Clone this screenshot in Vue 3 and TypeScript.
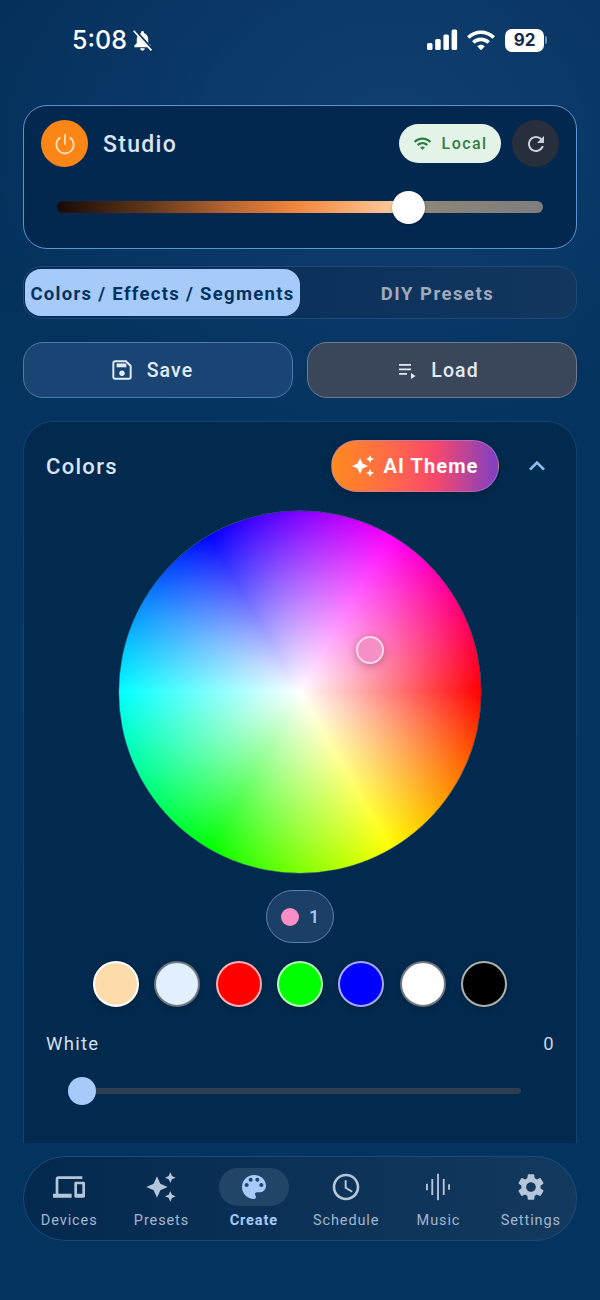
<script setup lang="ts">
const swatches: string[][] = [
  ['#fddcac', '#ffffff'],
  ['#e2f0fd', '#6d7480'],
  ['#ff0000', '#ffb0b0'],
  ['#00ff00', '#b4ffb4'],
  ['#0000ff', '#a8a8ff'],
  ['#ffffff', '#6f7680'],
  ['#000000', '#b0b0b0'],
]
const navItems = [
  { label: 'Devices', d: 'M4 6h18V4H4c-1.1 0-2 .9-2 2v11H0v3h14v-3H4V6zm19 2h-6c-.55 0-1 .45-1 1v10c0 .55.45 1 1 1h6c.55 0 1-.45 1-1V9c0-.55-.45-1-1-1zm-1 9h-4v-7h4v7z' },
  { label: 'Presets', d: 'M19 9l1.25-2.75L23 5l-2.75-1.25L19 1l-1.25 2.75L15 5l2.75 1.25L19 9zm-7.5.5L9 4 6.5 9.5 1 12l5.5 2.5L9 20l2.5-5.5L17 12l-5.5-2.5zM19 15l-1.25 2.75L15 19l2.75 1.25L19 23l1.25-2.75L23 19l-2.75-1.25L19 15z' },
  { label: 'Create', active: true, d: 'M12 3c-4.97 0-9 4.03-9 9s4.03 9 9 9c.83 0 1.5-.67 1.5-1.5 0-.39-.15-.74-.39-1.01-.23-.26-.38-.61-.38-.99 0-.83.67-1.5 1.5-1.5H16c2.76 0 5-2.24 5-5 0-4.42-4.03-8-9-8zm-5.5 9c-.83 0-1.5-.67-1.5-1.5S5.67 9 6.5 9 8 9.67 8 10.5 7.33 12 6.5 12zm3-4C8.67 8 8 7.33 8 6.5S8.67 5 9.5 5s1.5.67 1.5 1.5S10.33 8 9.5 8zm5 0c-.83 0-1.5-.67-1.5-1.5S13.67 5 14.5 5s1.5.67 1.5 1.5S15.33 8 14.5 8zm3 4c-.83 0-1.5-.67-1.5-1.5S16.67 9 17.5 9s1.5.67 1.5 1.5-.67 1.5-1.5 1.5z' },
  { label: 'Schedule', d: 'M11.99 2C6.47 2 2 6.48 2 12s4.47 10 9.99 10C17.52 22 22 17.52 22 12S17.52 2 11.99 2zM12 20c-4.42 0-8-3.58-8-8s3.58-8 8-8 8 3.58 8 8-3.58 8-8 8zm.5-13H11v6l5.25 3.15.75-1.23-4.5-2.67z' },
  { label: 'Music', d: 'M7 18h1.4V6H7v12zm4.3 4h1.4V2h-1.4v20zM3 14.5h1.4v-5H3v5zm12.6 3.5H17V6h-1.4v12zm4-8v4H21v-4h-1.4z' },
  { label: 'Settings', d: 'M19.14 12.94c.04-.3.06-.61.06-.94 0-.32-.02-.64-.07-.94l2.03-1.58c.18-.14.23-.41.12-.61l-1.92-3.32c-.12-.22-.37-.29-.59-.22l-2.39.96c-.5-.38-1.03-.7-1.62-.94l-.36-2.54c-.04-.24-.24-.41-.48-.41h-3.84c-.24 0-.43.17-.47.41l-.36 2.54c-.59.24-1.13.57-1.62.94l-2.39-.96c-.22-.08-.47 0-.59.22L2.74 8.87c-.12.21-.08.47.12.61l2.03 1.58c-.05.3-.09.63-.09.94s.02.64.07.94l-2.03 1.58c-.18.14-.23.41-.12.61l1.92 3.32c.12.22.37.29.59.22l2.39-.96c.5.38 1.03.7 1.62.94l.36 2.54c.05.24.24.41.48.41h3.84c.24 0 .44-.17.47-.41l.36-2.54c.59-.24 1.13-.56 1.62-.94l2.39.96c.22.08.47 0 .59-.22l1.92-3.32c.12-.22.07-.47-.12-.61l-2.01-1.58zM12 15.6c-1.98 0-3.6-1.62-3.6-3.6s1.62-3.6 3.6-3.6 3.6 1.62 3.6 3.6-1.62 3.6-3.6 3.6z' },
]
const wifi = 'M1 9l2 2c4.97-4.97 13.03-4.97 18 0l2-2C16.93 2.93 7.08 2.93 1 9zm8 8l3 3 3-3c-1.65-1.66-4.34-1.66-6 0zm-4-4l2 2c2.76-2.76 7.24-2.76 10 0l2-2C15.14 9.14 8.87 9.14 5 13z'
</script>

<template>
  <div class="page">
    <header class="status">
      <div class="status-left">
        <span class="time">5:08</span>
        <svg class="bell" viewBox="0 0 24 24" width="23" height="23">
          <path fill="#fff" d="M12 2.200c-.9 0-1.600.7-1.600 1.600v.7C7.600 5.200 6 7.700 6 10.600v4.300L3.500 17.300v1.700h17v-1.700L18 14.900v-4.300c0-2.900-1.600-5.400-4.400-6.100v-.7c0-.9-.7-1.600-1.600-1.600zM9.600 20.200a2.400 2.400 0 0 0 4.800 0z" />
          <path stroke="#0a3563" stroke-width="3.400" d="M3.800 1.500 L22.300 22" />
          <path stroke="#fff" stroke-width="1.800" d="M2.800 1.800 L21.300 22.300" />
        </svg>
      </div>
      <div class="status-right">
        <svg width="31" height="22" viewBox="0 0 31 22">
          <rect x="0" y="14" width="5.5" height="7" rx="1.5" fill="#fff" />
          <rect x="8.2" y="10" width="5.5" height="11" rx="1.5" fill="#fff" />
          <rect x="16.4" y="5.5" width="5.5" height="15.5" rx="1.5" fill="#fff" />
          <rect x="24.6" y="0.5" width="5.5" height="20.5" rx="1.5" fill="#fff" />
        </svg>
        <svg class="st-wifi" width="28" height="24" viewBox="1 3 22 18"><path fill="#fff" :d="wifi" /></svg>
        <div class="battery"><span>92</span></div>
        <i class="nub"></i>
      </div>
    </header>

    <section class="device">
      <div class="device-top">
        <button class="power">
          <svg width="26" height="26" viewBox="0 0 24 24" fill="none" stroke="#ffe4c4" stroke-width="1.6" stroke-linecap="round"><path d="M12 3.500v8.500" /><path d="M7.200 6.200a8 8 0 1 0 9.600 0" /></svg>
        </button>
        <span class="device-name">Studio</span>
        <span class="local">
          <svg width="19" height="19" viewBox="0 0 24 24"><path fill="#2f7d46" :d="wifi" /></svg>
          <span>Local</span>
        </span>
        <button class="refresh">
          <svg width="24" height="24" viewBox="0 0 24 24"><path fill="#c9cfd8" d="M17.650 6.350C16.200 4.900 14.210 4 12 4c-4.420 0-7.990 3.580-7.990 8s3.570 8 7.990 8c3.730 0 6.840-2.550 7.730-6h-2.080c-.82 2.330-3.040 4-5.650 4-3.310 0-6-2.690-6-6s2.690-6 6-6c1.660 0 3.140.69 4.220 1.780L13 11h7V4l-2.350 2.350z" /></svg>
        </button>
      </div>
      <div class="bright">
        <div class="bright-fill"></div>
        <div class="bright-rest"></div>
        <i class="bright-thumb"></i>
      </div>
    </section>

    <nav class="tabs">
      <button class="tab on">Colors / Effects / Segments</button>
      <button class="tab">DIY Presets</button>
    </nav>

    <div class="actions">
      <button class="act save">
        <svg width="26" height="26" viewBox="0 0 24 24" fill="none"><path stroke="#e3ebf5" stroke-width="1.800" d="M5.500 4h10.200L20 8.300v10.200a1.500 1.500 0 0 1-1.500 1.500h-13A1.500 1.500 0 0 1 4 18.500v-13A1.500 1.500 0 0 1 5.500 4z" /><rect x="7" y="6" width="9" height="3.500" fill="#e3ebf5" /><circle cx="12" cy="15" r="2.500" fill="#e3ebf5" /></svg>
        <span>Save</span>
      </button>
      <button class="act load">
        <svg width="24" height="24" viewBox="0 0 24 24" fill="#e3ebf5"><path d="M4 6h12v1.800H4zM4 10.500h12v1.800H4zM4 15h8v1.800H4zM16 15v6l4.500-3z" /></svg>
        <span>Load</span>
      </button>
    </div>

    <section class="colors">
      <div class="colors-head">
        <h2>Colors</h2>
        <button class="ai">
          <svg width="24" height="24" viewBox="0 0 24 24"><path fill="#fff" d="M19 9l1.250-2.750L23 5l-2.750-1.250L19 1l-1.250 2.750L15 5l2.750 1.250L19 9zm-7.500.5L9 4 6.500 9.500 1 12l5.500 2.500L9 20l2.500-5.500L17 12l-5.500-2.500zM19 15l-1.250 2.750L15 19l2.750 1.250L19 23l1.250-2.750L23 19l-2.750-1.250L19 15z" /></svg>
          <span>AI Theme</span>
        </button>
        <svg class="chev" width="32" height="32" viewBox="0 0 24 24"><path fill="#8fbdf3" d="M12 8l-6 6 1.410 1.410L12 10.830l4.590 4.580L18 14z" /></svg>
      </div>

      <div class="wheel">
        <i class="marker"></i>
      </div>

      <div class="chip-row">
        <div class="chip"><i></i><span>1</span></div>
      </div>

      <div class="swatches">
        <i v-for="s in swatches" :key="s[0] + s[1]" class="swatch" :style="{ background: s[0], borderColor: s[1] }"></i>
      </div>

      <div class="white-row"><span>White</span><span class="val">0</span></div>
      <div class="white-slider"><i class="w-thumb"></i></div>
    </section>

    <nav class="bottom">
      <div v-for="n in navItems" :key="n.label" class="nav-item" :class="{ active: n.active }">
        <span class="nav-icon">
          <svg width="32" height="32" viewBox="0 0 24 24"><path fill="currentColor" :d="n.d" /></svg>
        </span>
        <span class="nav-label">{{ n.label }}</span>
      </div>
    </nav>
  </div>
</template>

<style>
html, body { margin: 0; background: #03325f; }
</style>

<style scoped>
.page {
  width: 600px;
  height: 1300px;
  box-sizing: border-box;
  padding: 0 23px;
  overflow: hidden;
  display: flex;
  flex-direction: column;
  font-family: Roboto, "Liberation Sans", sans-serif;
  background:
    radial-gradient(400px 320px at 390px 130px, #104071 0%, rgba(16, 64, 113, 0) 100%),
    linear-gradient(180deg, #05305c 0%, #033560 50%, #03335f 100%);
}
button { font-family: inherit; border: 0; padding: 0; margin: 0; }
.status {
  height: 105px;
  flex: none;
  display: flex;
  justify-content: space-between;
  align-items: flex-start;
  padding: 27px 30px 0 49px;
  box-sizing: border-box;
  color: #fff;
}
.status-left { display: flex; align-items: center; gap: 4px; height: 26px; }
.time { font-family: Inter, sans-serif; font-size: 25px; font-weight: 500; letter-spacing: 0; }
.status-right { display: flex; align-items: center; height: 26px; }
.st-wifi { margin-left: 9px; }
.battery {
  margin-left: 10px;
  width: 39px;
  height: 23px;
  border-radius: 7px;
  background: #fff;
  display: flex;
  align-items: center;
  justify-content: center;
  font-family: Inter, sans-serif;
  font-size: 17px;
  font-weight: 700;
  color: #11294a;
}
.nub { width: 2px; height: 8px; margin-left: 1px; background: #7d8ea5; border-radius: 0 2px 2px 0; }

.device {
  flex: none;
  height: 144px;
  box-sizing: border-box;
  border: 1.500px solid #5b94cf;
  border-radius: 24px;
  background: #022850;
  padding: 14px 17px 0;
}
.device-top { display: flex; align-items: center; height: 47px; }
.power {
  width: 47px;
  height: 47px;
  border-radius: 50%;
  background: #fb8616;
  display: flex;
  align-items: center;
  justify-content: center;
}
.device-name { margin-left: 15px; padding-top: 2px; font-size: 23px; font-weight: 500; color: #dde3f3; letter-spacing: 1.300px; flex: 1; }
.local {
  width: 102px;
  height: 39px;
  box-sizing: border-box;
  border-radius: 20px;
  background: #e4f3e7;
  display: flex;
  align-items: center;
  justify-content: center;
  gap: 10px;
  font-size: 16px;
  font-weight: 500;
  letter-spacing: 1.400px;
  color: #2f7d46;
}
.refresh {
  margin-left: 11px;
  width: 47px;
  height: 47px;
  border-radius: 50%;
  background: #262f3b;
  display: flex;
  align-items: center;
  justify-content: center;
}
.bright {
  position: relative;
  display: flex;
  margin: 34px 16px 0;
  height: 12px;
  border-radius: 6px;
}
.bright-fill {
  width: 352px;
  border-radius: 6px 0 0 6px;
  background: linear-gradient(90deg, #170b05 0%, #5e3518 25%, #b5632e 48%, #f4863c 68%, #fbb67d 88%, #ffd6ab 100%);
}
.bright-rest {
  flex: 1;
  border-radius: 0 6px 6px 0;
  background: linear-gradient(90deg, #8f8777, #7e7e7e);
}
.bright-thumb {
  position: absolute;
  left: 335px;
  top: -10.500px;
  width: 33px;
  height: 33px;
  border-radius: 50%;
  background: #fff;
  box-shadow: 0 1px 3px rgba(0, 0, 0, 0.3);
}

.tabs {
  flex: none;
  margin-top: 17px;
  height: 53px;
  box-sizing: border-box;
  border: 1px solid #1d4a7a;
  border-radius: 18px;
  background: linear-gradient(90deg, #052d58, #12365e);
  padding: 2px 1px;
  display: flex;
}
.tab {
  background: none;
  padding-top: 2px;
  font-size: 18.500px;
  font-weight: 700;
  letter-spacing: 1.500px;
  color: #a0aabb;
  flex: 1;
  white-space: nowrap;
  border-radius: 16px;
}
.tab.on { flex: none; width: 275px; background: #a6cbfb; color: #05325f; letter-spacing: 1.300px; }

.actions { flex: none; display: grid; grid-template-columns: 1fr 1fr; gap: 14px; margin-top: 23px; }
.act {
  height: 56px;
  box-sizing: border-box;
  border-radius: 20px;
  padding-right: 10px;
  display: flex;
  align-items: center;
  justify-content: center;
  gap: 12px;
  font-size: 19.500px;
  font-weight: 500;
  letter-spacing: 1.100px;
  color: #e3ebf5;
}
.save { background: #1a4473; border: 1.500px solid #4f7aab; padding-right: 14px; }
.load { background: #3a4659; border: 1.500px solid #707c8d; }

.colors {
  flex: none;
  margin-top: 23px;
  height: 722px;
  box-sizing: border-box;
  border: 1px solid #134272;
  border-bottom: 0;
  border-radius: 30px 30px 0 0;
  background: #012a4e;
  padding: 18px 22px 0;
}
.colors-head { display: flex; align-items: center; height: 52px; }
.colors-head h2 { margin: 0; flex: 1; font-size: 22px; font-weight: 500; letter-spacing: 1.300px; color: #dde3f3; }
.ai {
  width: 168px;
  height: 52px;
  border-radius: 26px;
  background: linear-gradient(90deg, #ff8a1f 0%, #ff6a48 35%, #f8486a 62%, #7d40c4 100%);
  border: 1px solid rgba(180, 130, 210, 0.6);
  box-sizing: border-box;
  box-shadow: 0 2px 6px rgba(0, 0, 0, 0.25);
  display: flex;
  align-items: center;
  justify-content: center;
  gap: 8px;
  color: #fff;
  font-size: 20px;
  font-weight: 700;
  letter-spacing: 1.100px;
}
.chev { margin-left: 22px; margin-right: 1px; }

.wheel {
  position: relative;
  width: 362px;
  height: 362px;
  margin: 19px auto 0;
  border-radius: 50%;
  box-shadow: 0 0 0 0.5px rgba(255, 255, 255, 0.3);
  background:
    radial-gradient(closest-side, #fff 0%, rgba(255, 255, 255, 0) 100%),
    conic-gradient(from 90deg, #f00 0deg, #ff0 60deg, #0f0 120deg, #00ff88 150deg, #0ff 180deg, #0a88ff 210deg, #00f 240deg, #f0f 300deg, #f00 360deg);
}
.marker {
  position: absolute;
  left: 237px;
  top: 125px;
  width: 28px;
  height: 28px;
  box-sizing: border-box;
  border-radius: 50%;
  border: 2.500px solid #f9d8ea;
  background: #f78fc6;
  box-shadow: 0 2px 8px rgba(0, 0, 0, 0.25);
}
.chip-row { display: flex; justify-content: center; margin-top: 17px; }
.chip {
  width: 68px;
  height: 53px;
  box-sizing: border-box;
  border: 1.500px solid #5b84b2;
  border-radius: 27px;
  background: #1b3f66;
  display: flex;
  align-items: center;
  justify-content: center;
  gap: 10px;
  font-size: 18px;
  font-weight: 500;
  color: #a6cbfb;
}
.chip i { width: 18px; height: 18px; border-radius: 50%; background: #fb8ec4; }
.swatches { display: flex; justify-content: center; gap: 15.300px; margin-top: 18px; }
.swatch {
  width: 46px;
  height: 46px;
  box-sizing: border-box;
  border-radius: 50%;
  border: 2px solid;
  box-shadow: 0 2px 6px rgba(0, 0, 0, 0.2);
}
.white-row {
  display: flex;
  justify-content: space-between;
  margin-top: 26px;
  height: 22px;
  font-size: 18.500px;
  letter-spacing: 1.300px;
  color: #d6dfeb;
}
.white-row .val { color: #c7d4e5; margin-right: -1px; }
.white-slider {
  position: relative;
  margin: 33px 33px 0 24px;
  height: 6px;
  border-radius: 3px;
  background: #2e3d4f;
}
.w-thumb {
  position: absolute;
  left: -2px;
  top: -11px;
  width: 28px;
  height: 28px;
  border-radius: 50%;
  background: #a6cbfb;
}

.bottom {
  flex: none;
  margin-top: 13px;
  height: 85px;
  box-sizing: border-box;
  box-shadow: inset 0 0 0 1px #1c4a7c;
  border-radius: 42px;
  background: linear-gradient(90deg, #04294f, #13395f);
  display: grid;
  grid-template-columns: repeat(6, 1fr);
}
.nav-item {
  display: flex;
  flex-direction: column;
  align-items: center;
  color: #b4c4d8;
  padding-top: 12px;
}
.nav-icon {
  width: 70px;
  height: 38px;
  border-radius: 19px;
  display: flex;
  align-items: center;
  justify-content: center;
  color: #b6c6da;
}
.nav-label { margin-top: 6px; font-size: 14.500px; letter-spacing: 0.900px; line-height: 18px; color: #a5b6cc; white-space: nowrap; }
.nav-item.active .nav-icon { background: #234469; color: #a6cbfb; }
.nav-item.active .nav-label { color: #a6cbfb; font-weight: 700; }
</style>
